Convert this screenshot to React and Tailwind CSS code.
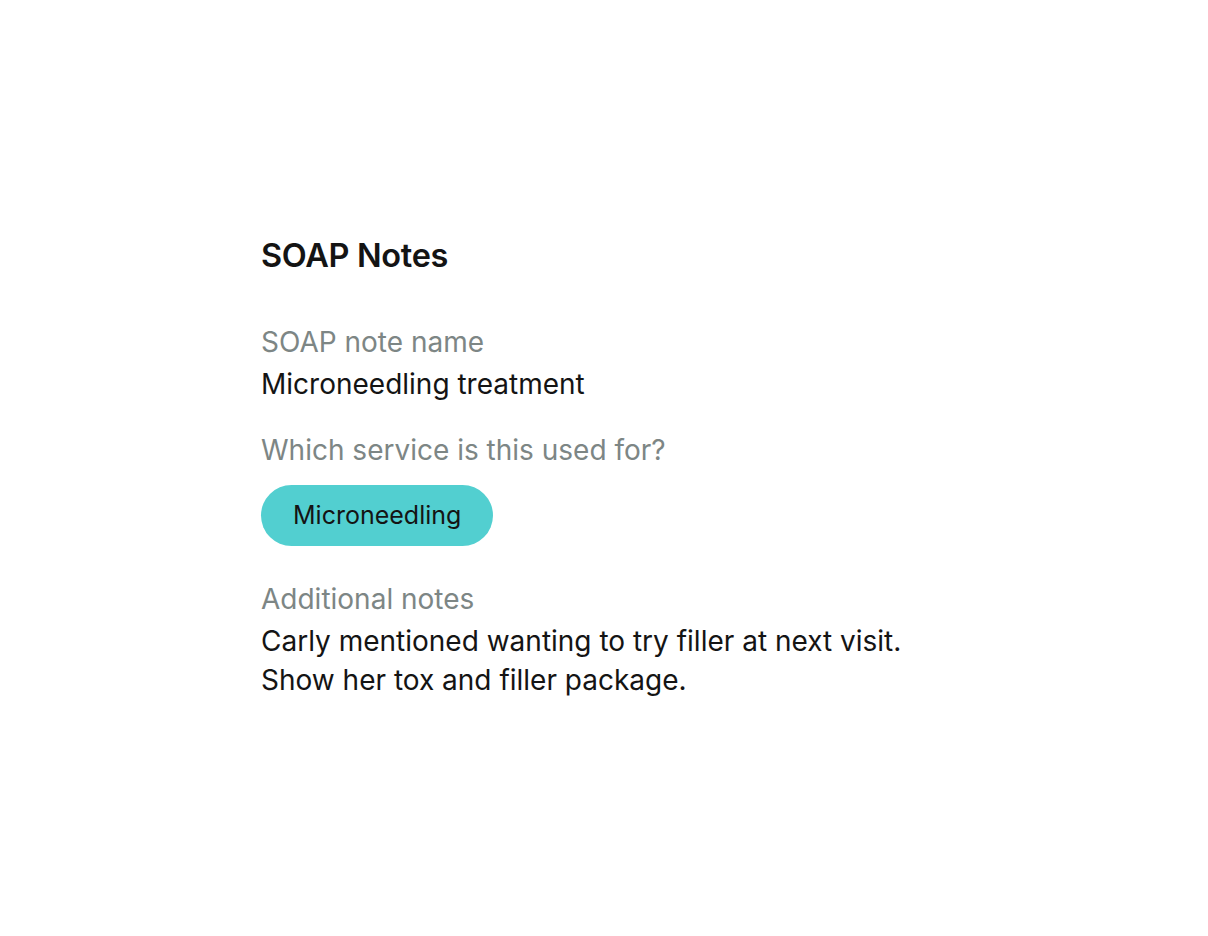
export default function App() {
  return (
    <div
      className="min-h-[936px] w-full bg-white pl-[261px] pt-[236px] text-[#141414]"
      style={{ fontFamily: 'Inter, "Liberation Sans", sans-serif' }}
    >
      <h1 className="text-[32.5px] leading-[40px] font-semibold tracking-[-0.01em]">SOAP Notes</h1>

      <div className="mt-[47px] flex flex-col">
        <div className="text-[28px] leading-[38px] text-[#7d8685]">SOAP note name</div>
        <div className="mt-[4px] text-[28px] leading-[38px]">Microneedling treatment</div>

        <div className="mt-[28px] text-[28px] leading-[38px] text-[#7d8685]">Which service is this used for?</div>
        <div className="mt-[16px]">
          <span className="inline-flex h-[61px] items-center rounded-full bg-[#52cfd0] px-[32px] text-[25px]">
            Microneedling
          </span>
        </div>

        <div className="mt-[34px] text-[28px] leading-[38px] text-[#7d8685]">Additional notes</div>
        <div className="mt-[4px] text-[28px] leading-[39px]">
          Carly mentioned wanting to try filler at next visit.
          <br />
          Show her tox and filler package.
        </div>
      </div>
    </div>
  );
}
